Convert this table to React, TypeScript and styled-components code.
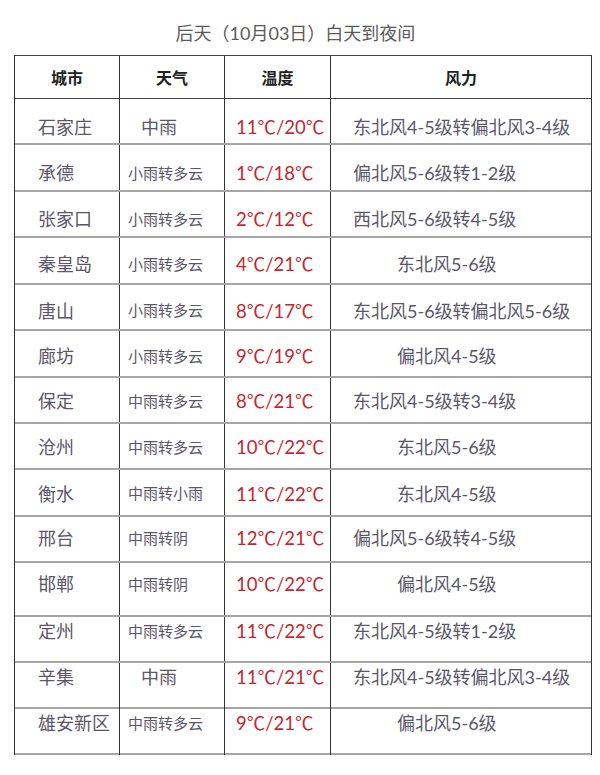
import React, { FC } from "react";
import styled, { createGlobalStyle } from "styled-components";

const GlobalStyle = createGlobalStyle`
  body {
    margin: 0;
    background: #ffffff;
    font-family: Lato, "Noto Sans CJK SC", sans-serif;
  }
`;

const Page = styled.div`
  width: 600px;
  padding-top: 21px;
`;

const Title = styled.div`
  width: 591px;
  text-align: center;
  font-size: 18px;
  line-height: 24px;
  color: #5a5a5a;
  margin-bottom: 10px;
`;

const Table = styled.div`
  margin-left: 14px;
  width: 578px;
  box-sizing: border-box;
  border-top: 1px solid #444;
  border-left: 1px solid #333;
  border-right: 1px solid #333;
`;

const Row = styled.div<{ $h: number; $head?: boolean }>`
  display: grid;
  grid-template-columns: 105px 105px 106px 260px;
  height: ${(p) => p.$h}px;
  box-sizing: border-box;
  border-bottom: ${(p) => (p.$head ? "1px solid #444" : "2px solid #a6a6a6")};
`;

const Cell = styled.div<{ $pad?: number; $shift?: number; $last?: boolean }>`
  display: flex;
  align-items: center;
  box-sizing: border-box;
  border-right: ${(p) => (p.$last ? "none" : "1px solid #333")};
  padding-left: ${(p) => p.$pad ?? 0}px;
  padding-top: ${(p) => Math.max(0, (p.$shift ?? 0) * 2)}px;
  padding-bottom: ${(p) => Math.max(0, -(p.$shift ?? 0) * 2)}px;
  white-space: nowrap;
  color: #5b5668;
  font-size: 18px;
`;

const HeadCell = styled(Cell)`
  justify-content: center;
  font-family: "Noto Sans CJK SC", sans-serif;
  font-weight: 700;
  font-size: 16px;
  color: #222;
`;

const Weather = styled(Cell)<{ $small: boolean }>`
  font-size: ${(p) => (p.$small ? 15 : 18)}px;
`;

const Temp = styled(Cell)`
  color: #c4262e;
  font-size: 18.5px;
`;

type Item = {
  city: string;
  weather: string;
  temp: string;
  wind: string;
  h: number;
  shift: number;
  windPad: number;
};

const rows: Item[] = [
  { city: "石家庄", weather: "中雨", temp: "11℃/20℃", wind: "东北风4-5级转偏北风3-4级", h: 46, shift: 5, windPad: 22 },
  { city: "承德", weather: "小雨转多云", temp: "1℃/18℃", wind: "偏北风5-6级转1-2级", h: 47, shift: 4.5, windPad: 22 },
  { city: "张家口", weather: "小雨转多云", temp: "2℃/12℃", wind: "西北风5-6级转4-5级", h: 46, shift: 4, windPad: 22 },
  { city: "秦皇岛", weather: "小雨转多云", temp: "4℃/21℃", wind: "东北风5-6级", h: 47, shift: 2.5, windPad: 66 },
  { city: "唐山", weather: "小雨转多云", temp: "8℃/17℃", wind: "东北风5-6级转偏北风5-6级", h: 46, shift: 2.5, windPad: 22 },
  { city: "廊坊", weather: "小雨转多云", temp: "9℃/19℃", wind: "偏北风4-5级", h: 47, shift: 1.5, windPad: 66 },
  { city: "保定", weather: "中雨转多云", temp: "8℃/21℃", wind: "东北风4-5级转3-4级", h: 46, shift: 0, windPad: 22 },
  { city: "沧州", weather: "中雨转多云", temp: "10℃/22℃", wind: "东北风5-6级", h: 46, shift: 0, windPad: 66 },
  { city: "衡水", weather: "中雨转小雨", temp: "11℃/22℃", wind: "东北风4-5级", h: 47, shift: 0, windPad: 66 },
  { city: "邢台", weather: "中雨转阴", temp: "12℃/21℃", wind: "偏北风5-6级转4-5级", h: 46, shift: -2, windPad: 22 },
  { city: "邯郸", weather: "中雨转阴", temp: "10℃/22℃", wind: "偏北风4-5级", h: 54, shift: -6, windPad: 66 },
  { city: "定州", weather: "中雨转多云", temp: "11℃/22℃", wind: "东北风4-5级转1-2级", h: 46, shift: -9, windPad: 22 },
  { city: "辛集", weather: "中雨", temp: "11℃/21℃", wind: "东北风4-5级转偏北风3-4级", h: 46, shift: -10, windPad: 22 },
  { city: "雄安新区", weather: "中雨转多云", temp: "9℃/21℃", wind: "偏北风5-6级", h: 46, shift: -11, windPad: 66 },
];

const App: FC = () => {
  return (
    <>
      <GlobalStyle />
      <Page>
        <Title>后天（10月03日）白天到夜间</Title>
        <Table>
          <Row $h={43} $head>
            <HeadCell>城市</HeadCell>
            <HeadCell>天气</HeadCell>
            <HeadCell>温度</HeadCell>
            <HeadCell $last>风力</HeadCell>
          </Row>
          {rows.map((r) => {
            const small = r.weather.length > 2;
            return (
              <Row key={r.city} $h={r.h}>
                <Cell $pad={23} $shift={r.shift}>{r.city}</Cell>
                <Weather $small={small} $pad={small ? 8 : 21} $shift={r.shift}>
                  {r.weather}
                </Weather>
                <Temp $pad={11} $shift={r.shift}>{r.temp}</Temp>
                <Cell $pad={r.windPad} $shift={r.shift} $last>
                  {r.wind}
                </Cell>
              </Row>
            );
          })}
        </Table>
      </Page>
    </>
  );
};

export default App;
